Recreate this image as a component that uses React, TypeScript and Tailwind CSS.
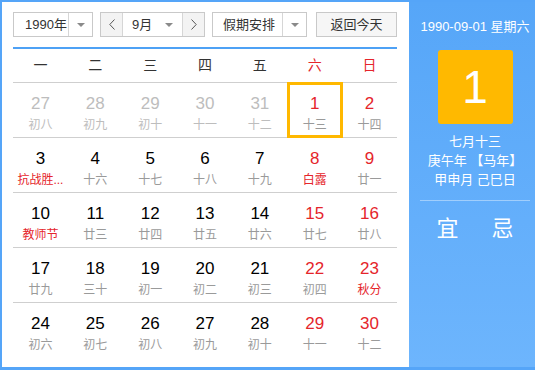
import React from "react";

type Day = { n: number; l: string; other?: boolean; fest?: boolean; sel?: boolean };

const weeks: Day[][] = [
  [
    { n: 27, l: "初八", other: true },
    { n: 28, l: "初九", other: true },
    { n: 29, l: "初十", other: true },
    { n: 30, l: "十一", other: true },
    { n: 31, l: "十二", other: true },
    { n: 1, l: "十三", sel: true },
    { n: 2, l: "十四" },
  ],
  [
    { n: 3, l: "抗战胜...", fest: true },
    { n: 4, l: "十六" },
    { n: 5, l: "十七" },
    { n: 6, l: "十八" },
    { n: 7, l: "十九" },
    { n: 8, l: "白露", fest: true },
    { n: 9, l: "廿一" },
  ],
  [
    { n: 10, l: "教师节", fest: true },
    { n: 11, l: "廿三" },
    { n: 12, l: "廿四" },
    { n: 13, l: "廿五" },
    { n: 14, l: "廿六" },
    { n: 15, l: "廿七" },
    { n: 16, l: "廿八" },
  ],
  [
    { n: 17, l: "廿九" },
    { n: 18, l: "三十" },
    { n: 19, l: "初一" },
    { n: 20, l: "初二" },
    { n: 21, l: "初三" },
    { n: 22, l: "初四" },
    { n: 23, l: "秋分", fest: true },
  ],
  [
    { n: 24, l: "初六" },
    { n: 25, l: "初七" },
    { n: 26, l: "初八" },
    { n: 27, l: "初九" },
    { n: 28, l: "初十" },
    { n: 29, l: "十一" },
    { n: 30, l: "十二" },
  ],
];

const weekdays = ["一", "二", "三", "四", "五", "六", "日"];

function Caret() {
  return (
    <svg width="8" height="4" viewBox="0 0 8 4">
      <polygon points="0,0 8,0 4,4" fill="#8a8a8a" />
    </svg>
  );
}

function Chevron({ dir }: { dir: "l" | "r" }) {
  return (
    <svg width="6" height="11" viewBox="0 0 6 11">
      <polyline
        points={dir === "l" ? "5.5,0.5 0.8,5.5 5.5,10.5" : "0.5,0.5 5.2,5.5 0.5,10.5"}
        fill="none"
        stroke="#555"
        strokeWidth="1"
      />
    </svg>
  );
}

function Toolbar() {
  return (
    <div className="flex h-[25px] text-[13px] text-[#333]">
      <div className="flex w-[80px] border border-[#c9c9c9] bg-white">
        <span className="flex flex-1 items-center pl-[11px]">1990年</span>
        <span className="flex w-[24px] items-center justify-center border-l border-[#d6d6d6]">
          <Caret />
        </span>
      </div>
      <div className="ml-[7px] flex w-[105px] border border-[#c9c9c9] bg-white">
        <span className="flex w-[22px] items-center justify-center border-r border-[#d6d6d6] bg-[#f3f3f3]">
          <Chevron dir="l" />
        </span>
        <span className="flex flex-1 items-center pl-[9px]">
          9月
          <span className="ml-auto mr-[9px] flex">
            <Caret />
          </span>
        </span>
        <span className="flex w-[22px] items-center justify-center border-l border-[#d6d6d6] bg-[#f3f3f3]">
          <Chevron dir="r" />
        </span>
      </div>
      <div className="ml-[7px] flex w-[95px] border border-[#c9c9c9] bg-white">
        <span className="flex flex-1 items-center pl-[10px]">假期安排</span>
        <span className="flex w-[24px] items-center justify-center border-l border-[#d6d6d6]">
          <Caret />
        </span>
      </div>
      <div className="ml-[9px] flex w-[81px] items-center justify-center border border-[#c9c9c9] bg-[#f6f6f6]">
        返回今天
      </div>
    </div>
  );
}

function Cell({ d, weekend }: { d: Day; weekend: boolean }) {
  const numColor = d.other ? "text-[#bdbdbd]" : weekend ? "text-[#e5252b]" : "text-black";
  const lunColor = d.other ? "text-[#bdbdbd]" : d.fest ? "text-[#e5252b]" : "text-[#9a9a9a]";
  return (
    <div className="relative flex flex-col items-center pt-[11px]">
      <span className={`text-[17px] leading-[20px] ${numColor}`}>{d.n}</span>
      <span className={`mt-[3px] text-[12px] leading-[17px] ${lunColor}`}>{d.l}</span>
      {d.sel && (
        <div className="absolute -top-px -bottom-px left-0 -right-px border-[3px] border-[#ffb800]" />
      )}
    </div>
  );
}

export default function App() {
  return (
    <div
      className="flex h-[370px] w-[535px] border-b-[3px] border-l-2 border-t-2 border-[#55a5f8]"
      style={{ fontFamily: '"Liberation Sans", "Noto Sans CJK SC", sans-serif' }}
    >
      <div className="w-[407px] bg-white pl-[11px] pr-[12px] pt-[10px]">
        <Toolbar />
        <div className="mt-[10px] grid h-[36px] grid-cols-7 items-center border-b border-t-2 border-b-[#cfcfcf] border-t-[#4ea1f5] text-[14px] text-[#333]">
          {weekdays.map((w, i) => (
            <span key={w} className={`text-center ${i >= 5 ? "text-[#e5252b]" : ""}`}>
              {w}
            </span>
          ))}
        </div>
        {weeks.map((wk, r) => (
          <div
            key={r}
            className={`grid h-[55px] grid-cols-7 ${r < weeks.length - 1 ? "border-b border-[#cfcfcf]" : ""}`}
          >
            {wk.map((d, i) => (
              <Cell key={i} d={d} weekend={i >= 5} />
            ))}
          </div>
        ))}
      </div>
      <div className="flex flex-1 flex-col items-center bg-gradient-to-b from-[#56a6f8] to-[#6db5fd] pl-[6px] text-white">
        <div className="mt-[16px] text-[13px] leading-[18px]">1990-09-01 星期六</div>
        <div className="mt-[14px] flex h-[74px] w-[75px] items-center justify-center rounded-[3px] bg-[#ffb900] text-[46px] leading-none">
          1
        </div>
        <div className="mt-[8px] flex flex-col items-center text-[13px] leading-[19px]">
          <span>七月十三</span>
          <span>庚午年 【马年】</span>
          <span>甲申月 己巳日</span>
        </div>
        <div className="mt-[11px] h-px w-[110px] bg-white/40" />
        <div className="mt-[14px] flex w-[110px] justify-around text-[22px] leading-[28px]">
          <span>宜</span>
          <span>忌</span>
        </div>
      </div>
    </div>
  );
}
